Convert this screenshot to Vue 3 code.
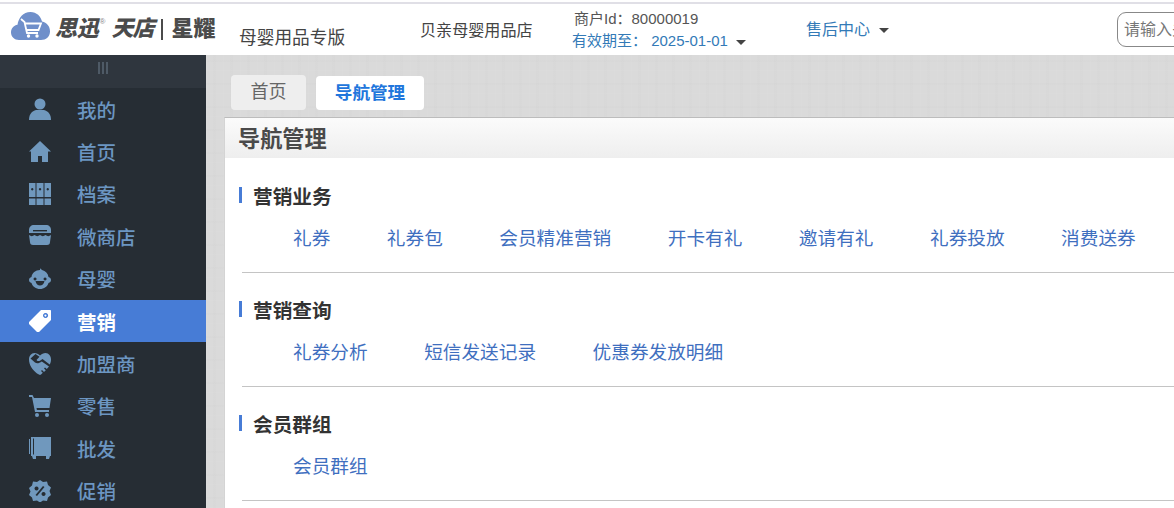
<script setup>
const menu = [
  { label: '我的', icon: 'user' },
  { label: '首页', icon: 'home' },
  { label: '档案', icon: 'files' },
  { label: '微商店', icon: 'store' },
  { label: '母婴', icon: 'baby' },
  { label: '营销', icon: 'tag', active: true },
  { label: '加盟商', icon: 'shake' },
  { label: '零售', icon: 'cart' },
  { label: '批发', icon: 'box' },
  { label: '促销', icon: 'promo' }
]
const sections = [
  { title: '营销业务', links: ['礼券', '礼券包', '会员精准营销', '开卡有礼', '邀请有礼', '礼券投放', '消费送券'] },
  { title: '营销查询', links: ['礼券分析', '短信发送记录', '优惠券发放明细'] },
  { title: '会员群组', links: ['会员群组'] }
]
</script>

<template>
  <div class="page">
    <header class="header">
      <div class="logo">
        <svg class="cloud" width="39" height="28" viewBox="0 0 39 28">
          <path fill="#6f8fca" d="M8 28C3.500 28 0 24.600 0 20.500 0 16.600 2.500 13.500 6.500 12.800 7.500 6 12 0 19.500 0 25.500 0 30 4.400 31 9.600 35.800 10.400 39 14.500 39 19.500 39 24.500 35 28 30 28z"/>
          <path fill="none" stroke="#fff" stroke-width="1.800" d="M10 7l3.500 3 2.500 11h11M14.500 11.500H30L27.500 18H16"/>
          <circle cx="17.500" cy="24" r="1.700" fill="#fff"/>
          <circle cx="26" cy="24" r="1.700" fill="#fff"/>
        </svg>
        <span class="logo-a">思迅</span><sup class="reg">®</sup>
        <span class="logo-b">天店</span>
        <span class="logo-bar"></span>
        <span class="logo-c">星耀</span>
      </div>
      <div class="edition">母婴用品专版</div>
      <div class="shop">贝亲母婴用品店</div>
      <div class="merchant">
        <div class="merchant-id">商户Id：80000019</div>
        <div class="expiry">有效期至： 2025-01-01 <i class="caret"></i></div>
      </div>
      <div class="service">售后中心 <i class="caret"></i></div>
      <input class="search" placeholder="请输入关键字" />
    </header>

    <div class="body">
      <aside class="sidebar">
        <div class="toggle"><span></span><span></span><span></span></div>
        <ul class="menu">
          <li v-for="m in menu" :key="m.label" class="item" :class="{ active: m.active }">
            <svg class="icon" width="22" height="22" viewBox="0 0 22 22" fill="currentColor">
              <template v-if="m.icon === 'user'">
                <circle cx="11" cy="6" r="5.500"/>
                <path d="M0 22c0-6 3-9 7-10h8c4 1 7 4 7 10z"/>
              </template>
              <path v-else-if="m.icon === 'home'" fill-rule="evenodd" d="M11 0l11 10.500h-3V21H2V10.500H0zM9 15v6h4v-6z"/>
              <path v-else-if="m.icon === 'files'" fill-rule="evenodd" d="M0 0h6.500v14H0zM7.500 0h7v14h-7zM15.500 0H22v14h-6.500zM0 15.500h6.500V22H0zM7.500 15.500h7V22h-7zM15.500 15.500H22V22h-6.500zM3.200 5a1.200 1.200 0 1 0 .1 0zM11 5a1.200 1.200 0 1 0 .1 0zM18.700 5a1.200 1.200 0 1 0 .1 0z"/>
              <template v-else-if="m.icon === 'store'">
                <path d="M5 0h12c3 0 5 2 5 5v3H0V5c0-3 2-5 5-5z"/>
                <path d="M0 10c2 1.500 3.500 1.500 5.500 0 2 1.500 3.500 1.500 5.500 0 2 1.500 3.500 1.500 5.500 0 2 1.500 3.500 1.500 5.500 0l-1 7c0 2-1 3-3 3H4c-2 0-3-1-3-3z"/>
                <path d="M4 5h14v1.400H4z" fill="#262d34"/>
              </template>
              <path v-else-if="m.icon === 'baby'" fill-rule="evenodd" d="M11 0c.5 1 1.500 1.500 2 2 3.500 1 6 3.500 6.500 7 1.500.3 2.500 1.500 2.500 3s-1 2.700-2.500 3c-1 3.500-4.500 6-8.500 6s-7.500-2.500-8.500-6C1 14.700 0 13.500 0 12s1-2.700 2.500-3C3 5 6.500 2 11 2zM6 9.500a1.500 1.500 0 1 0 .1 0zM16 9.500a1.500 1.500 0 1 0 .1 0zM6.500 13c.5 3 2.500 4.500 4.500 4.500s4-1.500 4.500-4.500z"/>
              <path v-else-if="m.icon === 'tag'" fill-rule="evenodd" d="M12 0h9c.6 0 1 .4 1 1v9L10 22c-.6.600-1.400.600-2 0L0 14c-.6-.6-.6-1.400 0-2zM16.500 3a2.500 2.500 0 1 0 .1 0zM16.500 4.500a1 1 0 1 1-.1 0z"/>
              <template v-else-if="m.icon === 'shake'">
                <path d="M5.500 0C7.500 0 9.500 1 11 2.500 12.500 1 14.500 0 16.500 0 19.800 0 22 3 22 6.500c0 2-.5 3.600-1.300 5L13.500 6c-1.600 1.400-3.500 2.500-5 2l-1-1L10.500 3.800 6.500 1 1.500 5.500 6 9.500C7.800 10.800 10 10.500 12.800 8.500L20 13.500 17.800 16 16 14.500 15 15.500 16.800 17.200 15 19 13 17 12 18 13.800 19.800 12 21.500 11 22 8 20.500C3.500 17 0 12 0 6.500 0 3 2.200 0 5.500 0z"/>
              </template>
              <template v-else-if="m.icon === 'cart'">
                <path d="M0 0h3.500L5 3h17l-1.500 10H7.500l.4 2H20v2H6L3 2H0z"/>
                <circle cx="8" cy="20" r="2"/><circle cx="18" cy="20" r="2"/>
              </template>
              <template v-else-if="m.icon === 'box'">
                <path d="M2 0h20v19H2z"/>
                <path d="M0 2h1v15h-1zM3 19h4v3H4zM17 19h4l-1 3h-3z"/>
                <path d="M4 1.500h1v16H4z" fill="#262d34"/>
              </template>
              <path v-else-if="m.icon === 'promo'" fill-rule="evenodd" d="M11 0l3 2 4-.5 1 3.500 3 2.500-1.500 3.500L22 15l-3 2.500-1 3.500-4-.5-3 2-3-2-4 .5-1-3.500L0 15l1.500-3.500L0 8l3-2.500L4 1.500 8 2zM7.500 6.500a2 2 0 1 0 .1 0zM14.500 12a2 2 0 1 0 .1 0zM14 6l-7.500 9 1.500 1 7.500-9z"/>
            </svg>
            <span>{{ m.label }}</span>
          </li>
        </ul>
      </aside>

      <main class="main">
        <div class="tabs">
          <div class="tab">首页</div>
          <div class="tab current">导航管理</div>
        </div>
        <div class="panel">
          <div class="panel-head">导航管理</div>
          <div class="panel-body">
            <section v-for="s in sections" :key="s.title" class="group">
              <h3 class="group-title">{{ s.title }}</h3>
              <div class="links">
                <a v-for="l in s.links" :key="l" class="link">{{ l }}</a>
              </div>
            </section>
          </div>
        </div>
      </main>
    </div>
  </div>
</template>

<style>
html, body { margin: 0; overflow: hidden; background: #fff; }
</style>

<style scoped>
.page {
  width: 1174px;
  height: 508px;
  overflow: hidden;
  display: flex;
  flex-direction: column;
  font-family: "Liberation Sans", "Noto Sans CJK SC", sans-serif;
}
.header {
  height: 51px;
  flex: none;
  margin-top: 2px;
  border-top: 2px solid #e0dfe6;
  display: flex;
  align-items: flex-start;
  background: #fff;
  white-space: nowrap;
  color: #444;
}
.logo {
  width: 239px;
  flex: none;
  display: flex;
  align-items: center;
  height: 46px;
  padding-left: 11px;
  box-sizing: border-box;
  color: #4b4b4b;
  font-weight: 900;
  font-size: 22px;
  line-height: 26px;
}
.logo span { position: relative; top: 2px; }
.cloud { flex: none; margin: -2px 6px 0 0; }
.logo-a { font-style: italic; margin-left: -1px; letter-spacing: -0.2px; }
.reg { font-size: 8px; font-weight: 400; line-height: 8px; margin: -10px 4px 0 1px; color: #888; }
.logo-b { font-style: italic; letter-spacing: -1px; margin-left: 2px; }
.logo .logo-bar { width: 2px; height: 21px; background: #4b4b4b; margin: 0 9px 0 7px; top: 2px; }
.edition { width: 181px; flex: none; font-size: 17.700px; line-height: 26px; margin-top: 21px; color: #444; }
.shop { width: 153px; flex: none; font-size: 16.100px; line-height: 24px; margin-top: 14px; color: #444; }
.merchant { width: 233px; flex: none; font-size: 15px; margin-top: 5px; }
.merchant-id { line-height: 20px; color: #555; padding-left: 1px; }
.expiry { line-height: 20px; margin: 2px 0 0 -1px; color: #337ab7; }
.caret {
  display: inline-block;
  vertical-align: middle;
  margin-left: 4px;
  border-top: 5px solid #444;
  border-left: 5px solid transparent;
  border-right: 5px solid transparent;
}
.service { width: 311px; flex: none; font-size: 16px; line-height: 24px; margin-top: 14px; color: #337ab7; }
.service .caret { margin-left: 5px; }
.search {
  flex: none;
  width: 120px;
  height: 35px;
  margin-top: 8px;
  box-sizing: border-box;
  border: 1px solid #888;
  border-radius: 9px;
  padding: 0 6px;
  font: 16px "Liberation Sans", "Noto Sans CJK SC", sans-serif;
  outline: none;
}
.search::placeholder { color: #777; opacity: 1; }
.body { flex: 1; display: flex; min-height: 0; }
.sidebar { width: 206px; flex: none; background: #262d34; }
.toggle {
  height: 33px;
  background: #2f363e;
  display: flex;
  justify-content: center;
  align-items: center;
  gap: 2px;
  padding-bottom: 8px;
  box-sizing: border-box;
}
.toggle span { width: 2px; height: 12px; background: #4e5a66; }
.menu { list-style: none; margin: 0; padding: 0; }
.item {
  height: 42.400px;
  display: flex;
  align-items: center;
  padding-left: 29px;
  gap: 26px;
  font-size: 19.500px;
  font-weight: 500;
  color: #6c96c2;
}
.item .icon { color: #7098bd; flex: none; }
.item.active { background: #477cd6; color: #fff; font-weight: 700; }
.item.active .icon { color: #fff; }
.main {
  flex: 1;
  min-width: 0;
  padding: 20px 0 0 18px;
  background-color: #dadada;
  background-image:
    repeating-linear-gradient(90deg, rgba(255,255,255,.035) 0 1px, transparent 1px 7px, rgba(0,0,0,.008) 7px 10px, transparent 10px 17px),
    repeating-linear-gradient(0deg, rgba(255,255,255,.03) 0 1px, transparent 1px 9px, rgba(0,0,0,.008) 9px 11px, transparent 11px 23px);
}
.tabs { display: flex; gap: 10px; padding-left: 7px; align-items: flex-end; height: 35px; }
.tab {
  width: 75px;
  height: 35px;
  line-height: 34px;
  border-radius: 4px;
  background: #eee;
  color: #666;
  text-align: center;
  font-size: 18px;
}
.tab.current {
  width: 108px;
  height: 34px;
  background: #fff;
  color: #2176dc;
  font-weight: 700;
  font-size: 17.600px;
}
.panel {
  margin-top: 7px;
  width: 1000px;
  background: #fff;
  border-top: 1px solid #bcbcbc;
  border-left: 1px solid #d4d4d4;
  height: 400px;
}
.panel-head {
  height: 40px;
  line-height: 44px;
  padding-left: 13px;
  font-size: 22.200px;
  font-weight: 700;
  color: #4a4a4a;
  background: linear-gradient(#fbfbfb, #eeeeee);
}
.panel-body { padding: 0 0 0 14px; }
.group { height: 114px; box-sizing: border-box; padding-top: 28px; }
.group:first-child { height: 115px; padding-top: 29px; }
.group-title {
  margin: 0;
  border-left: 3px solid #477cd6;
  height: 16px;
  line-height: 20px;
  padding-left: 11px;
  font-size: 19.700px;
  font-weight: 700;
  color: #333;
}
.links {
  display: flex;
  gap: 56.500px;
  margin-left: 3px;
  padding: 23px 0 0 51px;
  height: 70px;
  box-sizing: border-box;
  border-bottom: 1px solid #c4c4c4;
}
.link { font-size: 18.670px; color: #3f6fbf; line-height: 26px; }
</style>
